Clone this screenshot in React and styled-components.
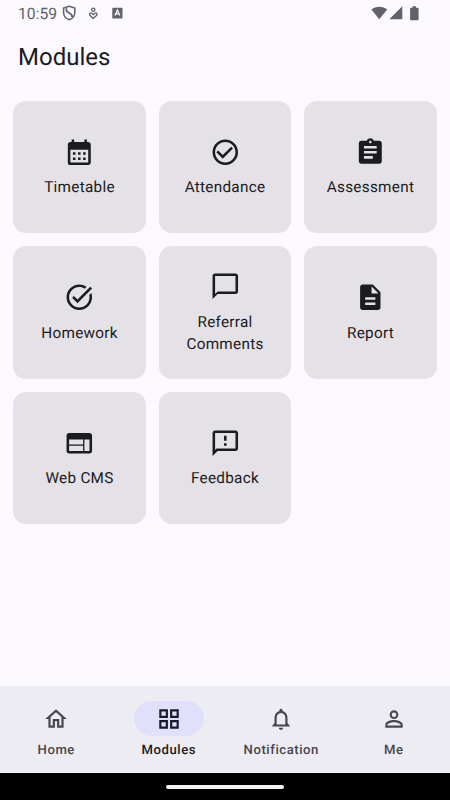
import React from "react";
import styled, { createGlobalStyle } from "styled-components";
import {
  MdAssignment,
  MdCalendarMonth,
  MdChatBubbleOutline,
  MdCheckCircleOutline,
  MdDescription,
  MdOutlineFeedback,
  MdOutlineGridView,
  MdOutlineHome,
  MdOutlineNotifications,
  MdPersonOutline,
  MdTaskAlt,
  MdWeb
} from "react-icons/md";

const GlobalStyle = createGlobalStyle`
  * {
    box-sizing: border-box;
  }
  body {
    margin: 0;
    background: #fbf8ff;
    font-family: Roboto, sans-serif;
    text-rendering: geometricPrecision;
  }
`;

const Screen = styled.div`
  display: flex;
  flex-direction: column;
  width: 450px;
  height: 800px;
  overflow: hidden;
  background: #fbf8ff;
  color: #1b1b21;
`;

const StatusBar = styled.div`
  display: flex;
  align-items: center;
  height: 26px;
  padding: 0 31px 0 18px;
  color: #636268;
`;

const Clock = styled.span`
  width: 44px;
  padding-top: 1px;
  font-size: 15.7px;
  line-height: 26px;
  white-space: nowrap;
`;

const StatusIcons = styled.div`
  display: flex;
  align-items: center;
  svg {
    display: block;
  }
`;

const NotificationIcons = styled(StatusIcons)`
  gap: 12px;
`;

const SystemIcons = styled(StatusIcons)`
  margin-left: auto;
`;

const Spacer = styled.span`
  width: ${props => props.$size}px;
`;

const Title = styled.h1`
  margin: 0;
  height: 75px;
  padding: 13px 18px 0;
  font-size: 24px;
  font-weight: 400;
  line-height: 36px;
`;

const Grid = styled.div`
  flex: 1;
  display: grid;
  grid-template-columns: repeat(3, 1fr);
  grid-auto-rows: 132.3px;
  gap: 13.2px;
  padding: 0 13.4px;
`;

const Card = styled.div`
  display: flex;
  flex-direction: column;
  align-items: center;
  justify-content: center;
  gap: 8.5px;
  padding-top: 0.8px;
  border-radius: 13px;
  background: #e4e1e7;
  svg {
    display: block;
    font-size: 30.6px;
  }
`;

const CardLabel = styled.span`
  width: 100px;
  text-align: center;
  font-size: 15.3px;
  line-height: 22px;
  letter-spacing: 0.28px;
`;

const NavBar = styled.nav`
  display: grid;
  grid-template-columns: repeat(4, 1fr);
  height: 87px;
  background: #eeecf3;
  border-bottom: 1px solid #f7f6fa;
`;

const NavItem = styled.div`
  display: flex;
  flex-direction: column;
  align-items: center;
  padding-top: 15.4px;
  color: ${props => (props.$active ? "#1b1b21" : "#46464f")};
`;

const Pill = styled.div`
  display: flex;
  align-items: center;
  justify-content: center;
  width: 70px;
  height: 35px;
  border-radius: 18px;
  ${props => props.$active && `background: #e0e0fa; color: #181a2c;`};
  svg {
    font-size: 26px;
  }
`;

const NavLabel = styled.span`
  margin-top: 5.4px;
  font-size: 13.1px;
  font-weight: 500;
  line-height: 18px;
  letter-spacing: 0.55px;
`;

const GestureBar = styled.div`
  display: flex;
  align-items: center;
  justify-content: center;
  height: 27px;
  background: #000000;
`;

const Handle = styled.div`
  width: 118px;
  height: 4px;
  border-radius: 2px;
  background: #f2f2f2;
`;

const ShieldIcon = () => (
  <svg width="15" height="16" viewBox="0 0 15 16" fill="none" stroke="currentColor">
    <path d="M7.2 1.2 L12.8 3 V7.5 C12.8 11 10.2 13.6 7.2 14.7 C4.2 13.6 1.6 11 1.6 7.5 V3 Z" strokeWidth="1.5" />
    <path d="M4.4 3.2 V5.4 C4.4 7.6 10.4 7.6 10.2 12" strokeWidth="1.8" />
  </svg>
);

const CareIcon = () => (
  <svg width="10" height="13" viewBox="0.7 0 10 13" fill="none" stroke="currentColor">
    <circle cx="5" cy="2.7" r="1.6" strokeWidth="1.3" />
    <path d="M5 11.4 L1.6 8.3 C.6 7 2 5.4 3.4 6.2 L5 7.6 L6.6 6.2 C8 5.4 9.4 7 8.4 8.3 Z" strokeWidth="1.3" />
  </svg>
);

const LetterIcon = () => (
  <svg width="12" height="12" viewBox="-1 0 12 12">
    <rect x="0.3" y="0.8" width="10.2" height="10.8" rx="0.8" fill="currentColor" />
    <path d="M3 8.4 L5.4 3 L7.8 8.4 M3.8 6.8 H7" fill="none" stroke="#fbf8ff" strokeWidth="1.3" />
  </svg>
);

const WifiIcon = () => (
  <svg width="17" height="14" viewBox="0 0 17 14">
    <path d="M8.2 13.2 L.4 3.6 C5 -.2 11.6 -.2 16.2 3.6 Z" fill="currentColor" />
  </svg>
);

const SignalIcon = () => (
  <svg width="14" height="14" viewBox="0 0 14 14">
    <path d="M13.3 .3 V13.3 H.3 Z" fill="currentColor" />
  </svg>
);

const BatteryIcon = () => (
  <svg width="9" height="15" viewBox="0 0 9 15">
    <path
      d="M2.5 .3 H6 V1.7 H7.6 Q8.6 1.7 8.6 2.7 V13.3 Q8.6 14.2 7.6 14.2 H1 Q.1 14.2 .1 13.3 V2.7 Q.1 1.7 1 1.7 H2.5 Z"
      fill="currentColor"
    />
  </svg>
);

const modules = [
  { label: "Timetable", Icon: MdCalendarMonth },
  { label: "Attendance", Icon: MdCheckCircleOutline },
  { label: "Assessment", Icon: MdAssignment },
  { label: "Homework", Icon: MdTaskAlt },
  { label: "Referral Comments", Icon: MdChatBubbleOutline },
  { label: "Report", Icon: MdDescription },
  { label: "Web CMS", Icon: MdWeb },
  { label: "Feedback", Icon: MdOutlineFeedback }
];

const tabs = [
  { label: "Home", Icon: MdOutlineHome },
  { label: "Modules", Icon: MdOutlineGridView, active: true },
  { label: "Notification", Icon: MdOutlineNotifications },
  { label: "Me", Icon: MdPersonOutline }
];

const App = () => (
  <>
    <GlobalStyle />
    <Screen>
      <StatusBar>
        <Clock>10:59</Clock>
        <NotificationIcons>
          <ShieldIcon />
          <CareIcon />
          <LetterIcon />
        </NotificationIcons>
        <SystemIcons>
          <WifiIcon />
          <Spacer $size={1} />
          <SignalIcon />
          <Spacer $size={7} />
          <BatteryIcon />
        </SystemIcons>
      </StatusBar>
      <Title>Modules</Title>
      <Grid>
        {modules.map(({ label, Icon }) => (
          <Card key={label}>
            <Icon />
            <CardLabel>{label}</CardLabel>
          </Card>
        ))}
      </Grid>
      <NavBar>
        {tabs.map(({ label, Icon, active }) => (
          <NavItem key={label} $active={active}>
            <Pill $active={active}>
              <Icon />
            </Pill>
            <NavLabel>{label}</NavLabel>
          </NavItem>
        ))}
      </NavBar>
      <GestureBar>
        <Handle />
      </GestureBar>
    </Screen>
  </>
);

export default App;
